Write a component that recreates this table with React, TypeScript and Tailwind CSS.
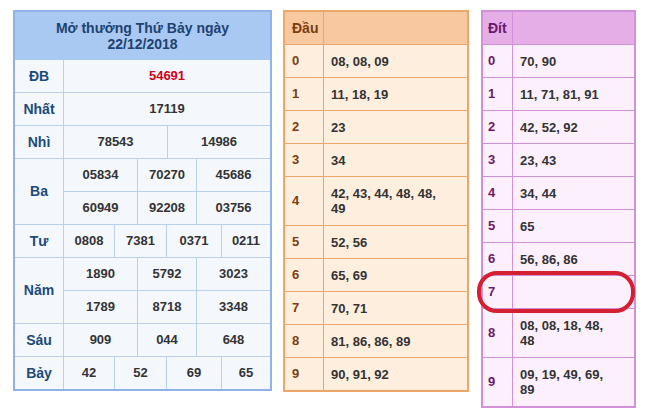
import React from "react";

const F = { fontFamily: '"Liberation Sans", Arial, sans-serif' };

function LRow({ label, cols, vals, h = "h-[33px]", labelClass = "", red = false }: { label?: string; cols: string; vals: string[]; h?: string; labelClass?: string; red?: boolean }) {
  return (
    <div className={`grid ${cols} ${h} border-t border-[#b9d0ee]`}>
      {vals.map((v, i) => (
        <div key={i} className={`flex items-center justify-center ${i < vals.length - 1 ? "border-r border-[#b9d0ee]" : ""} ${red ? "text-[#d0021b]" : "text-[#333]"}`}>
          {v}
        </div>
      ))}
    </div>
  );
}

const C3 = "grid-cols-[74px_59px_1fr]";
const C4 = "grid-cols-[51px_52px_55px_1fr]";
const C2 = "grid-cols-[104px_1fr]";
const C1 = "grid-cols-[1fr]";

function Group({ label, rows }: { label: string; rows: { cols: string; vals: string[]; red?: boolean }[] }) {
  return (
    <div className="flex border-t border-[#b9d0ee]">
      <div className="w-[49px] shrink-0 border-r border-[#b9d0ee] flex items-center justify-center text-[#1c4a7a] text-[14px]">
        {label}
      </div>
      <div className="flex-1 flex flex-col">
        {rows.map((r, i) => (
          <div key={i} className={`grid ${r.cols} ${i === 0 ? "h-[32px]" : "h-[33px] border-t border-[#b9d0ee]"}`}>
            {r.vals.map((v, j) => (
              <div key={j} className={`flex items-center justify-center ${j < r.vals.length - 1 ? "border-r border-[#b9d0ee]" : ""} ${r.red ? "text-[#d0021b]" : "text-[#333]"}`}>
                {v}
              </div>
            ))}
          </div>
        ))}
      </div>
    </div>
  );
}

function SideTable({
  title, width, labelW, rows, border, head, body, labelColor, labelPad,
}: {
  title: string; width: string; labelW: string; rows: { k: string; v: React.ReactNode; h: string }[];
  border: string; head: string; body: string; labelColor: string; labelPad: string;
}) {
  return (
    <div className={`${width} border-2 ${border} ${body} self-start`}>
      <div className={`flex h-[32px] ${head}`}>
        <div className={`${labelW} shrink-0 border-r ${border} flex items-center ${labelPad} ${labelColor} text-[14px]`}>{title}</div>
        <div className="flex-1" />
      </div>
      {rows.map((r) => (
        <div key={r.k} className={`flex ${r.h} border-t ${border}`}>
          <div className={`${labelW} shrink-0 border-r ${border} flex items-center ${labelPad} ${labelColor}`}>{r.k}</div>
          <div className="flex-1 flex items-center pl-[7px] text-[#333] leading-[15px]">{r.v}</div>
        </div>
      ))}
    </div>
  );
}

export default function App() {
  const dau = [
    ["0", "08, 08, 09"], ["1", "11, 18, 19"], ["2", "23"], ["3", "34"],
    ["4", <span key="a">42, 43, 44, 48, 48,<br />49</span>], ["5", "52, 56"], ["6", "65, 69"],
    ["7", "70, 71"], ["8", "81, 86, 86, 89"], ["9", "90, 91, 92"],
  ] as [string, React.ReactNode][];
  const dit = [
    ["0", "70, 90"], ["1", "11, 71, 81, 91"], ["2", "42, 52, 92"], ["3", "23, 43"],
    ["4", "34, 44"], ["5", "65"], ["6", "56, 86, 86"], ["7", ""],
    ["8", <span key="b">08, 08, 18, 48,<br />48</span>], ["9", <span key="c">09, 19, 49, 69,<br />89</span>],
  ] as [string, React.ReactNode][];

  return (
    <div className="relative w-[649px] h-[415px] bg-white overflow-hidden font-bold text-[13px]" style={F}>
      <div className="flex items-start pt-[10px] pl-[13px]">
        {/* Left table */}
        <div className="w-[259px] border-2 border-[#8fb3e6] bg-[#f4f8fd]">
          <div className="h-[48px] bg-[#a9c9f2] flex flex-col items-center justify-center text-[#1f4270] text-[14px] leading-[16px]">
            <div>Mở thưởng Thứ Bảy ngày</div>
            <div>22/12/2018</div>
          </div>
          <div className="[&>div:first-child]:border-t-0 flex flex-col">
            <Group label="ĐB" rows={[{ cols: C1, vals: ["54691"], red: true }]} />
            <Group label="Nhất" rows={[{ cols: C1, vals: ["17119"] }]} />
            <Group label="Nhì" rows={[{ cols: C2, vals: ["78543", "14986"] }]} />
            <Group label="Ba" rows={[{ cols: C3, vals: ["05834", "70270", "45686"] }, { cols: C3, vals: ["60949", "92208", "03756"] }]} />
            <Group label="Tư" rows={[{ cols: C4, vals: ["0808", "7381", "0371", "0211"] }]} />
            <Group label="Năm" rows={[{ cols: C3, vals: ["1890", "5792", "3023"] }, { cols: C3, vals: ["1789", "8718", "3348"] }]} />
            <Group label="Sáu" rows={[{ cols: C3, vals: ["909", "044", "648"] }]} />
            <Group label="Bảy" rows={[{ cols: C4, vals: ["42", "52", "69", "65"] }]} />
          </div>
        </div>

        <div className="ml-[11px]">
          <SideTable
            title="Đầu" width="w-[186px]" labelW="w-[39px]"
            rows={dau.map(([k, v]) => ({ k, v, h: k === "4" ? "h-[49px]" : "h-[33px]" }))}
            border="border-[#eba86a]" head="bg-[#f8c8a0]" body="bg-[#fdeede]"
            labelColor="text-[#7a3d10]" labelPad="pl-[7px]"
          />
        </div>
        <div className="ml-[12px]">
          <SideTable
            title="Đít" width="w-[155px]" labelW="w-[30px]"
            rows={dit.map(([k, v]) => ({ k, v, h: k === "8" || k === "9" ? "h-[49px]" : "h-[33px]" }))}
            border="border-[#d190d8]" head="bg-[#e6aee6]" body="bg-[#fcf0fc]"
            labelColor="text-[#6a1a6a]" labelPad="pl-[5px]"
          />
        </div>
      </div>
      <div className="absolute left-[477px] top-[271px] w-[158px] h-[42px] border-[4px] border-[#d42030] rounded-[20px]" />
    </div>
  );
}
